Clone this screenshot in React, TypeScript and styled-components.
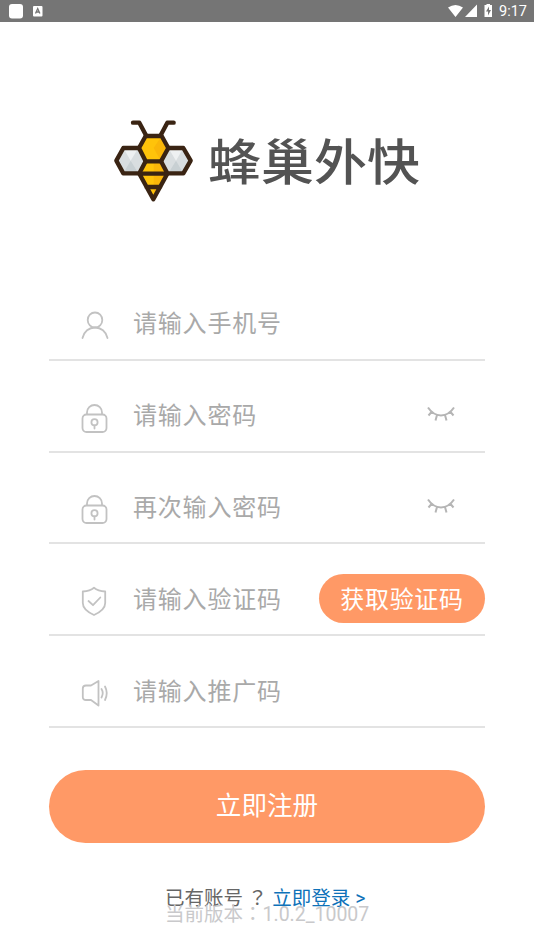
import React from "react";
import styled, { createGlobalStyle } from "styled-components";

const GlobalStyle = createGlobalStyle`
  * { box-sizing: border-box; }
  body { margin: 0; background: #fff; }
`;

const Screen = styled.div`
  display: flex;
  flex-direction: column;
  width: 534px;
  height: 950px;
  overflow: hidden;
  background: #fff;
  font-family: Roboto, "Noto Sans CJK SC", sans-serif;
`;

const StatusBar = styled.header`
  display: flex;
  justify-content: space-between;
  height: 22px;
  flex: none;
  background: #757575;
`;

const StatusGroup = styled.div`
  display: flex;
`;

const Clock = styled.span`
  width: 35px;
  color: #fff;
  font-size: 14.5px;
  line-height: 23px;
  white-space: nowrap;
`;

const Brand = styled.div`
  display: flex;
  flex: none;
  height: 247px;
  padding: 88px 0 0 105px;
`;

const BrandName = styled.h1`
  height: 80px;
  margin: 9px 0 0 3px;
  color: #535353;
  font-family: "Noto Sans CJK SC", sans-serif;
  font-size: 53px;
  font-weight: 500;
  line-height: 80px;
  white-space: nowrap;
  transform: scaleY(0.92);
`;

const Form = styled.main`
  display: flex;
  flex-direction: column;
  margin: 0 49px;
`;

const Field = styled.div`
  display: flex;
  align-items: center;
  height: 91.8px;
  padding-top: 19px;
  border-bottom: 2px solid #e3e3e3;
`;

const FieldIcon = styled.svg`
  flex: none;
  width: 32px;
  height: 34px;
  margin: 5px 22px 0 30px;
  fill: none;
  stroke: #c2c2c2;
  stroke-width: 1.8;
  stroke-linecap: round;
  stroke-linejoin: round;
`;

const Placeholder = styled.span`
  flex: 1;
  padding-top: 2px;
  color: #a9a9a9;
  font-size: 24px;
  line-height: 36px;
  letter-spacing: 0.8px;
  white-space: nowrap;
`;

const EyeIcon = styled.svg`
  width: 30px;
  height: 18px;
  margin: 0 29px 2px 0;
  fill: none;
  stroke: #b5b5b5;
  stroke-width: 2;
  stroke-linecap: butt;
`;

const CodeButton = styled.button`
  width: 166px;
  height: 49px;
  padding: 0 0 2px;
  border: 0;
  border-radius: 25px;
  background: #ff9966;
  color: #fff;
  font: inherit;
  font-size: 24px;
  letter-spacing: 0.7px;
`;

const SubmitButton = styled.button`
  height: 73px;
  margin-top: 42px;
  padding: 0 0 6px;
  border: 0;
  border-radius: 37px;
  background: #ff9966;
  color: #fff;
  font: inherit;
  font-size: 25.6px;
`;

const Footer = styled.footer`
  display: flex;
  flex-direction: column;
  margin: 40px 0 0 165px;
  font-size: 19.5px;
  white-space: nowrap;
`;

const LoginLine = styled.div`
  height: 16px;
  color: #666;
  line-height: 28px;
`;

const Mark = styled.span`
  font-family: "Noto Sans CJK TC", sans-serif;
`;

const LoginLink = styled.a`
  margin-left: 5px;
  color: #0e72b9;
`;

const Version = styled.div`
  color: #c9c9cb;
  line-height: 28px;
`;

const Bee = () => (
  <svg width="100" height="100" viewBox="0 0 300 300" strokeLinejoin="round" strokeLinecap="round">
    <g fill="#d9dee0">
      <path d="M55 114h45l19 38-19 38H55L34 152z" />
      <path d="M190 114h45l22 38-22 38h-45l-20-38z" />
    </g>
    <path fill="#eef1f2" d="M77 152 55 114h45zM213 152l-23-38h45z" />
    <path fill="#c8d0d3" d="M77 152l23 38H55zM213 152l22 38h-45z" />
    <path fill="#ffc30a" d="M122 78h48l20 36-22 40 20 38-43 76-43-76 20-38-21-40z" />
    <path fill="#f7ad08" d="m146 114 24-36 20 36-22 40zM146 156h22l19 36-41 74z" opacity=".6" />
    <g fill="none" stroke="#3a2413" strokeWidth="13">
      <path d="M84 38h19l20 38M206 38h-19l-20 38" />
      <path d="M122 78h48l20 36-22 40h-46l-20-40z" />
      <path d="M101 114H55l-21 38 21 38h48l19-36M190 114h45l22 38-22 38h-48l-19-36" />
      <path d="M103 191h84l-42 77zM124 231h42" />
    </g>
  </svg>
);

const UserIcon = () => (
  <FieldIcon viewBox="0 0 32 34">
    <ellipse cx="16" cy="11" rx="7.3" ry="7.5" />
    <path d="M3.500 29C5 22.500 10 18.500 16 18.500S27 22.500 28.500 29" />
  </FieldIcon>
);

const LockIcon = () => (
  <FieldIcon viewBox="0 0 32 34">
    <rect x="3.5" y="13.5" width="24" height="17.5" rx="4" />
    <path d="M8 13V11.500a7.500 7.500 0 0 1 15 0V13" />
    <circle cx="15.5" cy="21.3" r="3.1" />
    <path d="M15.500 24.500v3" />
  </FieldIcon>
);

const ShieldIcon = () => (
  <FieldIcon viewBox="0 0 32 34">
    <path d="M15 3.700c3 2.500 7 3.500 11.200 3.800V19c0 5.500-5 9.200-11.200 12-6.200-2.800-11.200-6.500-11.200-12V7.500C8 7.200 12 6.200 15 3.700z" />
    <path d="m9.500 17 4.500 4.200 7.300-7.700" />
  </FieldIcon>
);

const SpeakerIcon = () => (
  <FieldIcon viewBox="0 0 32 34">
    <path d="M19.500 5v24.500l-7.500-5.500H7c-2 0-3.200-1-3.200-3v-8.500c0-2 1.200-3 3.200-3h5z" />
    <path d="M22.500 13q2.500 4 0 8.500M26 10.500q3.500 6.500 0 13.500" />
  </FieldIcon>
);

const ClosedEye = () => (
  <EyeIcon viewBox="0 0 30 18">
    <path d="M2 2.500C9 13 21 13 28 2.500M5.500 7 2.500 10.500M11 10l-1.500 5.500M19 10l1.500 5.500M24.500 7l3 3.500" />
  </EyeIcon>
);

const fields = [
  { Icon: UserIcon, text: "请输入手机号" },
  { Icon: LockIcon, text: "请输入密码", trailing: <ClosedEye /> },
  { Icon: LockIcon, text: "再次输入密码", trailing: <ClosedEye /> },
  { Icon: ShieldIcon, text: "请输入验证码", trailing: <CodeButton>获取验证码</CodeButton> },
  { Icon: SpeakerIcon, text: "请输入推广码" },
];

export default function App() {
  return (
    <Screen>
      <GlobalStyle />
      <StatusBar>
        <StatusGroup>
          <svg width="60" height="22" viewBox="0 0 60 22">
            <rect x="9" y="4" width="14" height="14.500" rx="3" fill="#fff" />
            <rect x="33" y="6" width="9.500" height="10.500" rx="1" fill="#fff" />
            <path d="m35.500 13.500 2.200-5 2.200 5M36.300 12h3" fill="none" stroke="#757575" strokeWidth="1.300" />
          </svg>
        </StatusGroup>
        <StatusGroup>
          <svg width="51" height="22" viewBox="0 0 51 22" fill="#fff">
            <path d="M0 7.500Q7.500 2.500 15 7.500L7.500 17zM29 4.500V17H17z" />
            <path d="M36.500 5h2V4h3.500v1h2v12h-7.500z" />
            <path d="m41 6.500-3 5h2v4l3-5.500h-2z" fill="#757575" />
          </svg>
          <Clock>9:17</Clock>
        </StatusGroup>
      </StatusBar>
      <Brand>
        <Bee />
        <BrandName>蜂巢外快</BrandName>
      </Brand>
      <Form>
        {fields.map(({ Icon, text, trailing }) => (
          <Field key={text}>
            <Icon />
            <Placeholder>{text}</Placeholder>
            {trailing}
          </Field>
        ))}
        <SubmitButton>立即注册</SubmitButton>
      </Form>
      <Footer>
        <LoginLine>
          已有账号 <Mark lang="zh-TW">？</Mark>
          <LoginLink>立即登录 &gt;</LoginLink>
        </LoginLine>
        <Version>
          当前版本<Mark lang="zh-TW">：</Mark>1.0.2_10007
        </Version>
      </Footer>
    </Screen>
  );
}
